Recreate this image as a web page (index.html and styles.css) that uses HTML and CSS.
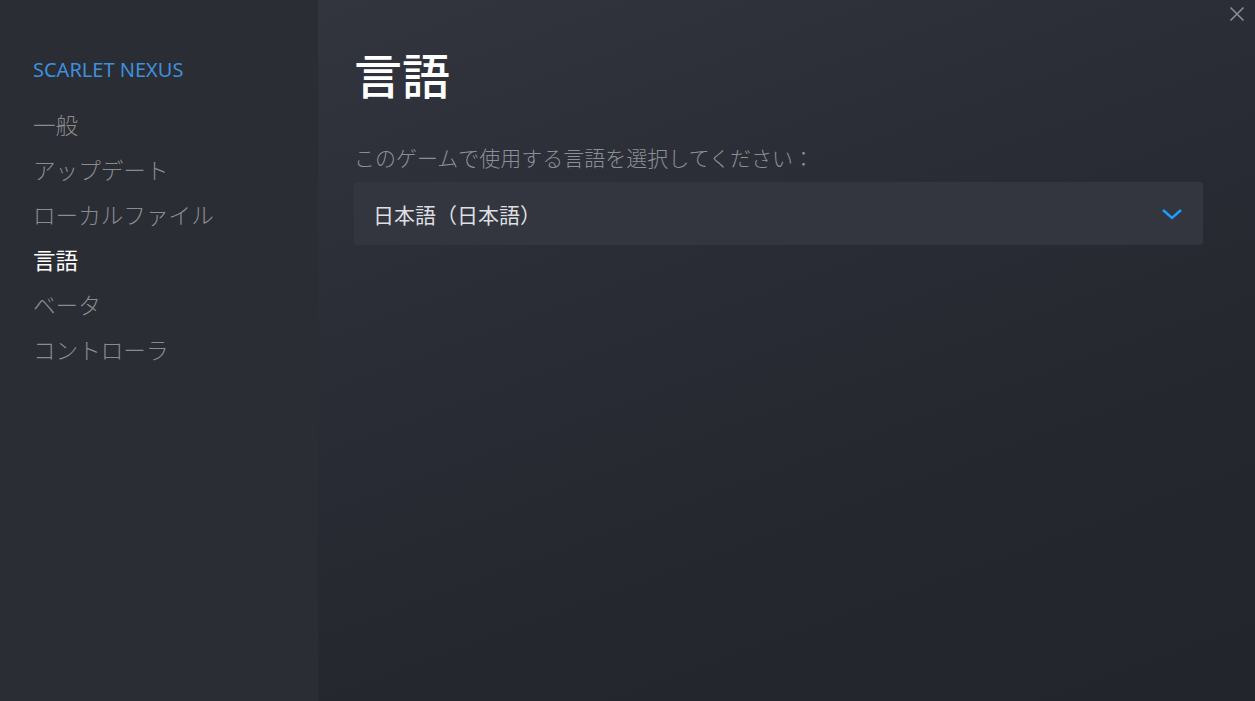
FILE: index.html
```html
<!DOCTYPE html>
<html lang="ja">
<head>
<meta charset="utf-8">
<link rel="stylesheet" href="styles.css">
</head>
<body>
<div class="app">
  <nav class="sidebar">
    <div class="game-title">SCARLET NEXUS</div>
    <ul class="menu">
      <li class="item">一般</li>
      <li class="item">アップデート</li>
      <li class="item">ローカルファイル</li>
      <li class="item active">言語</li>
      <li class="item">ベータ</li>
      <li class="item">コントローラ</li>
    </ul>
  </nav>
  <main class="content">
    <h1 class="heading">言語</h1>
    <div class="label">このゲームで使用する言語を選択してください：</div>
    <div class="select">
      <span class="select-text">日本語（日本語）</span>
      <svg class="chevron" width="22" height="14" viewBox="0 0 22 14"><path d="M2 3 L11 11 L20 3" fill="none" stroke="#1a9fff" stroke-width="2.4"/></svg>
    </div>
  </main>
  <button class="close" aria-label="close">
    <svg width="16" height="16" viewBox="0 0 16 16"><path d="M1.5 1.5 L14.5 14.5 M14.5 1.5 L1.5 14.5" stroke="#8b8e94" stroke-width="1.6"/></svg>
  </button>
</div>
</body>
</html>
```
FILE: styles.css
```css
html, body {
  margin: 0;
  padding: 0;
  width: 1255px;
  height: 701px;
  overflow: hidden;
}
body {
  font-family: "Noto Sans CJK JP", "Noto Sans", sans-serif;
  background: #24272f;
}
.app {
  position: relative;
  display: flex;
  width: 1255px;
  height: 701px;
}
.sidebar {
  width: 318px;
  flex: none;
  background: #2a2d34;
  box-sizing: border-box;
  padding: 56px 0 0 33px;
}
.game-title {
  font-family: "Noto Sans", sans-serif;
  color: #3f8fdc;
  font-size: 20px;
  line-height: 28px;
  margin-bottom: 17px;
}
.menu {
  list-style: none;
  margin: 0;
  padding: 0;
}
.item {
  color: #898b90;
  font-size: 22.6px;
  font-weight: 300;
  line-height: 45px;
  height: 45px;
  padding-top: 1px;
  margin-bottom: -1px;
}
.item.active {
  color: #ffffff;
  font-weight: 400;
}
.content {
  flex: 1;
  box-sizing: border-box;
  padding: 42px 52px 0 36px;
  background: linear-gradient(160deg, #32353d 0%, #2a2d35 35%, #24272e 70%, #22252c 100%);
}
.heading {
  margin: 0;
  color: #ffffff;
  font-weight: 500;
  font-size: 48px;
  line-height: 62px;
}
.label {
  margin-top: 38px;
  color: #8c8f95;
  font-size: 21px;
  font-weight: 300;
  line-height: 30px;
}
.select {
  margin-top: 10px;
  height: 63px;
  background: #33363f;
  border-radius: 3px;
  display: flex;
  align-items: center;
  justify-content: space-between;
  padding: 0 20px 0 19px;
}
.select-text {
  color: #dddfe2;
  font-size: 21px;
}
.chevron {
  display: block;
}
.close {
  position: absolute;
  top: 6px;
  right: 10px;
  background: none;
  border: 0;
  padding: 0;
  width: 16px;
  height: 16px;
}
.close svg {
  display: block;
}
```
